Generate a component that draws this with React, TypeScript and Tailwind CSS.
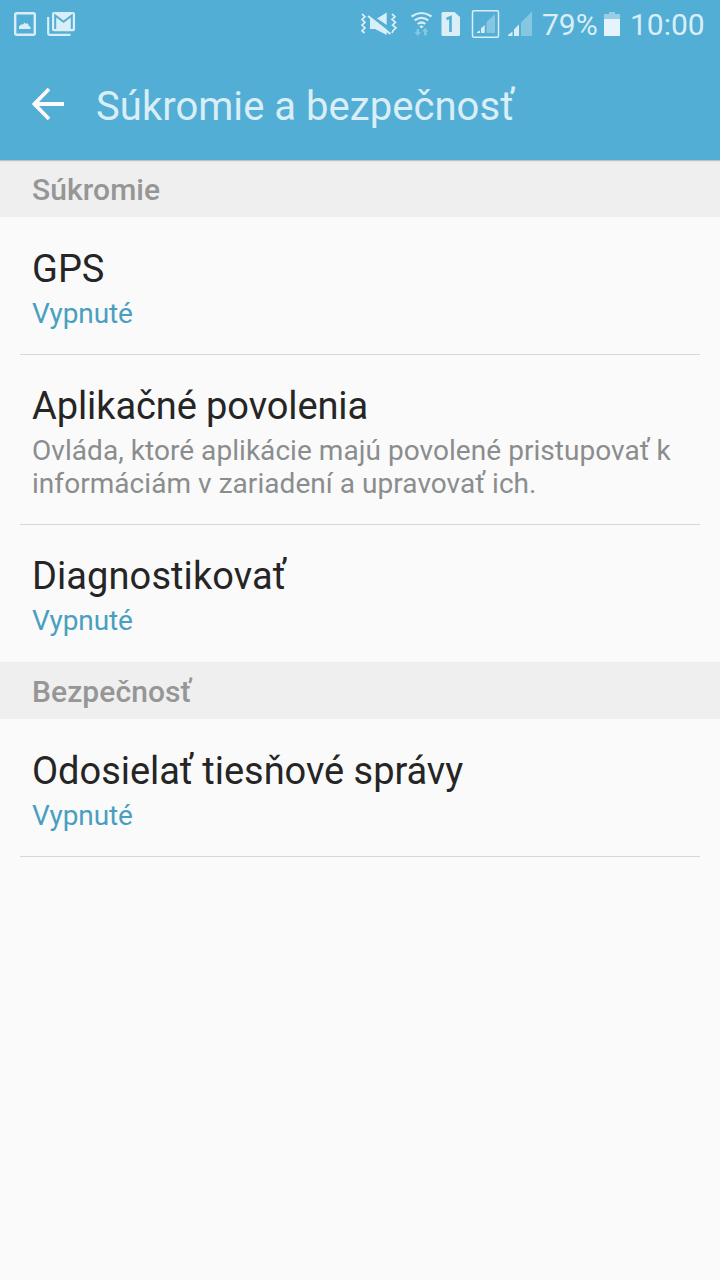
type Item = { title: string; summary: string; tracking: string; muted?: boolean; divider?: boolean };
type Section = { name: string; items: Item[] };

const SECTIONS: Section[] = [
  {
    name: "Súkromie",
    items: [
      { title: "GPS", summary: "Vypnuté", tracking: "tracking-normal", divider: true },
      {
        title: "Aplikačné povolenia",
        summary: "Ovláda, ktoré aplikácie majú povolené pristupovať k informáciám v zariadení a upravovať ich.",
        tracking: "tracking-[-0.09px]",
        muted: true,
        divider: true,
      },
      { title: "Diagnostikovať", summary: "Vypnuté", tracking: "tracking-[0.09px]" },
    ],
  },
  {
    name: "Bezpečnosť",
    items: [{ title: "Odosielať tiesňové správy", summary: "Vypnuté", tracking: "tracking-[-0.04px]", divider: true }],
  },
];

function NotificationIcons() {
  return (
    <svg width="80" height="48" viewBox="0 0 80 48" className="shrink-0" fill="none">
      {/* screenshot */}
      <rect x="15.2" y="13.2" width="19.6" height="21.6" rx="1.5" stroke="#d9eef7" strokeWidth="2.4" />
      <path d="M19 29v-2.500l2-2h2l1.500-2 1.500 1.500 1-1 1.500 1.500v1l2 1.500v2z" fill="#d9eef7" />
      {/* mail */}
      <path d="M48.200 17v16.500q0 1.300 1.300 1.300H70.500" stroke="#d9eef7" strokeWidth="2.200" />
      <rect x="52" y="12" width="23" height="19.300" rx="2" fill="#d9eef7" />
      <path d="M55.200 29V15.500l8.300 6.300 8.300-6.300V29" stroke="#52aed5" strokeWidth="2" />
    </svg>
  );
}

function SystemIcons() {
  return (
    <svg width="176" height="48" viewBox="360 0 176 48" className="shrink-0" fill="none">
      {/* vibrate, sound off */}
      <path
        d="M362 14l3 2.700-3 2.800 3 2.800-3 2.800 3 2.800-3 2.800 2.500 2.300M392 14l3 2.700-3 2.800 3.500 2.800-3 2.800 3.500 2.800-3 2.800-1 2.300"
        stroke="#d9eef7"
        strokeWidth="1.700"
      />
      <path d="M377 18.500l9.700-6V25zM370 18.500h2.500l14.200 11V35L375 29h-5z" fill="#d9eef7" />
      <path d="M368 16L390.500 34" stroke="#d9eef7" strokeWidth="2" />
      {/* wifi */}
      <path d="M411.500 16.500q10-7 20 0M414.700 20.300q6.800-5 13.600 0M417.700 24q3.800-3 7.600 0" stroke="#d9eef7" strokeWidth="2.200" />
      <path d="M419.300 26.200q2.200-1.600 4.400 0l-2.200 2.300z" fill="#d9eef7" />
      <path d="M416.500 29h2.500v3h2l-3.300 4-3.200-4h2zM424 35.500h2.500V31.500h2l-3.300-4-3.200 4h2z" fill="#85c6e1" />
      {/* sim 1 */}
      <path d="M443 12h11.500l5.500 5v17.500q0 1.500-1.500 1.500H443q-1.500 0-1.500-1.500v-21q0-1.500 1.500-1.500z" fill="#d9eef7" />
      <path d="M446.500 19l4-1.800V32" stroke="#52aed5" strokeWidth="2.600" />
      {/* roaming signal */}
      <rect x="472.500" y="10.700" width="26" height="26.600" rx="1.500" stroke="#d9eef7" strokeWidth="1.500" />
      <path d="M486.500 22l8.500-8v19h-8.500z" fill="#85c6e1" />
      <path d="M477 33v-1l3-1.500V33zM481 33v-4.500l3.700-3.500v8z" fill="#d9eef7" />
      {/* signal */}
      <path d="M521 22.500L532 11.500V36h-11z" fill="#85c6e1" />
      <path d="M508 36v-1l4.500-3.500V36zM514 36v-6.500l5-5V36z" fill="#d9eef7" />
    </svg>
  );
}

function StatusBar() {
  return (
    <div className="flex h-12 items-center text-[30px] leading-[48px] text-[#d9eef7]">
      <NotificationIcons />
      <div className="ml-[280px] flex items-center">
        <SystemIcons />
        <span className="ml-1.5 w-[61px] pt-[2px]">79%</span>
        <svg width="18" height="48" viewBox="0 0 18 48" className="shrink-0">
          <path d="M6 12h6v2h5v5H1v-5h5z" fill="#97cee6" />
          <path d="M1 19h16v17H1z" fill="#e5f4fa" />
        </svg>
        <span className="ml-[9px] pt-[2px]">10:00</span>
      </div>
    </div>
  );
}

function Row({ item }: { item: Item }) {
  return (
    <div className={item.divider ? "-mb-px px-5" : "px-5 pb-px"}>
      <div className="px-3 pt-[30px] pb-6">
        <div className={`text-[38px] leading-[45px] text-[#252525] ${item.tracking}`}>{item.title}</div>
        <div
          className={
            item.muted
              ? "mt-[5px] text-[28px] leading-[33px] tracking-[0.05px] text-[#8a8d8e]"
              : "mt-[5px] text-[28px] leading-[33px] tracking-[-0.1px] text-[#4a9fc0]"
          }
        >
          {item.summary}
        </div>
      </div>
      {item.divider && <div className="h-px bg-[#d7d7d7]" />}
    </div>
  );
}

export default function App() {
  return (
    <div className="h-[1280px] w-[720px] overflow-hidden bg-[#fafafa] font-[Roboto,sans-serif]">
      <header className="relative h-40 bg-[#52aed5] shadow-[0_1px_0_#bfc3c5,0_2px_0_#e4e4e4]">
        <StatusBar />
        <div className="flex h-28 items-center pl-8">
          <svg width="32" height="34" viewBox="0 0 32 34" fill="none" stroke="#fafafa" strokeWidth="3.800">
            <path d="M32 17H3M17 2L2.500 17 17 32" />
          </svg>
          <h1 className="ml-8 pt-1.5 text-[40px] leading-[48px] tracking-[0.04px] text-[#d9eef7]">Súkromie a bezpečnosť</h1>
        </div>
      </header>

      {SECTIONS.map((s) => (
        <section key={s.name}>
          <h2 className="h-[57px] bg-[#efefef] px-8 pt-[2px] text-[30px] leading-[56px] font-medium tracking-[0.08px] text-[#969696]">
            {s.name}
          </h2>
          {s.items.map((item) => (
            <Row key={item.title} item={item} />
          ))}
        </section>
      ))}
    </div>
  );
}
